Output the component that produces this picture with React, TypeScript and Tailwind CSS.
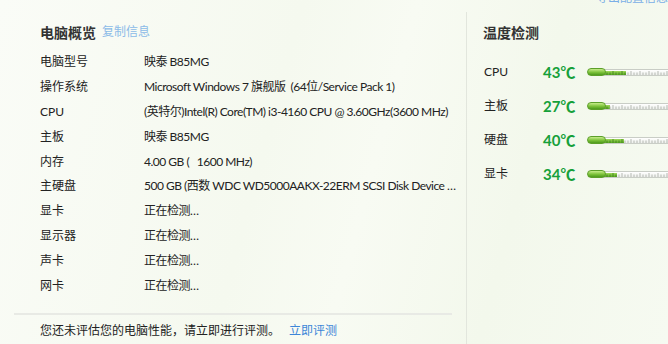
import React from "react";

const rows: [string, string][] = [
	["电脑型号", "映泰 B85MG"],
	["操作系统", "Microsoft Windows 7 旗舰版  (64位/Service Pack 1)"],
	["CPU", "(英特尔)Intel(R) Core(TM) i3-4160 CPU @ 3.60GHz(3600 MHz)"],
	["主板", "映泰 B85MG"],
	["内存", "4.00 GB (   1600 MHz)"],
	["主硬盘", "500 GB (西数 WDC WD5000AAKX-22ERM SCSI Disk Device …"],
	["显卡", "正在检测…"],
	["显示器", "正在检测…"],
	["声卡", "正在检测…"],
	["网卡", "正在检测…"],
];

const temps: { name: string; value: number; fill: number }[] = [
	{ name: "CPU", value: 43, fill: 26 },
	{ name: "主板", value: 27, fill: 10 },
	{ name: "硬盘", value: 40, fill: 24 },
	{ name: "显卡", value: 34, fill: 17 },
];

function Thermometer({ fill }: { fill: number }) {
	return (
		<div className="relative h-[10px] w-[80px] shrink-0">
			{/* tube */}
			<div className="absolute left-[12px] top-[2px] h-[7px] w-[90px] rounded-l-sm border border-[#c9cdc6] bg-[linear-gradient(#ffffff,#eef0ec)]">
				<div
					className="absolute left-0 top-[1px] h-[4px] bg-[linear-gradient(#9fd85a,#5aa923)]"
					style={{ width: fill }}
				/>
				<svg className="absolute left-0 top-0" width="90" height="6">
					{Array.from({ length: 30 }).map((_, i) => (
						<line
							key={i}
							x1={4 + i * 3}
							x2={4 + i * 3}
							y1={i % 3 === 0 ? 1 : 2.5}
							y2={5}
							stroke={4 + i * 3 < fill ? "#3d7f1c" : "#a5a9a2"}
							strokeWidth="0.8"
						/>
					))}
				</svg>
			</div>
			{/* bulb */}
			<div className="absolute left-0 top-[1px] h-[8px] w-[19px] rounded-full border border-[#5c9f2a] bg-[linear-gradient(#c6ec8a,#7cc23a_55%,#4e9a1d)]" />
		</div>
	);
}

export default function App() {
	return (
		<div
			className="relative h-[344px] w-[668px] overflow-hidden bg-[#f6faf0] bg-[linear-gradient(105deg,#fafcf7_0%,#f5f9ef_40%,#f8fbf3_55%,#f3f8ec_75%,#f6faf1_100%)] text-[12px] text-[#222]"
			style={{ fontFamily: 'Lato, "Noto Sans CJK SC", sans-serif' }}
		>
			<span className="absolute right-[0px] top-[-11px] text-[12px] text-[#7aaee6]">导出配置信息</span>

			<div className="flex h-full">
				{/* left panel */}
				<div className="flex w-[466px] shrink-0 flex-col">
					<div className="flex h-[20px] items-center gap-[6px] pl-[40px] mt-[22px]">
						<span className="text-[14px] font-bold text-[#333]">电脑概览</span>
						<span className="text-[12px] text-[#8cbbe8]">复制信息</span>
					</div>
					<div className="mt-[8px] flex flex-col pl-[40px]">
						{rows.map(([k, v]) => (
							<div key={k} className="flex h-[24.8px] items-center">
								<span className="w-[104px] shrink-0">{k}</span>
								<span className="whitespace-pre tracking-[-0.5px]">{v}</span>
							</div>
						))}
					</div>
					<div className="ml-[14px] mt-[15px] h-[2px] w-[438px] bg-[#e8eae5]" />
					<div className="flex h-[20px] items-center pl-[40px] mt-[6px]">
						<span>您还未评估您的电脑性能，请立即进行评测。</span>
						<span className="ml-[9px] text-[#3d86d8]">立即评测</span>
					</div>
				</div>

				{/* divider */}
				<div className="mt-[12px] w-px shrink-0 bg-[#e2e6dd]" />

				{/* right panel */}
				<div className="flex flex-1 flex-col pl-[16px]">
					<div className="flex h-[20px] mt-[22px] items-center text-[14px] font-bold text-[#333]">温度检测</div>
					<div className="mt-[13px] flex flex-col">
						{temps.map((t) => (
							<div key={t.name} className="flex h-[34px] items-center">
								<span className="w-[60px] shrink-0 pl-[1px]">{t.name}</span>
								<span className="w-[44px] shrink-0 text-[15px] font-bold text-[#16a03a]">
									{t.value}℃
								</span>
								<Thermometer fill={t.fill} />
							</div>
						))}
					</div>
				</div>
			</div>
		</div>
	);
}
